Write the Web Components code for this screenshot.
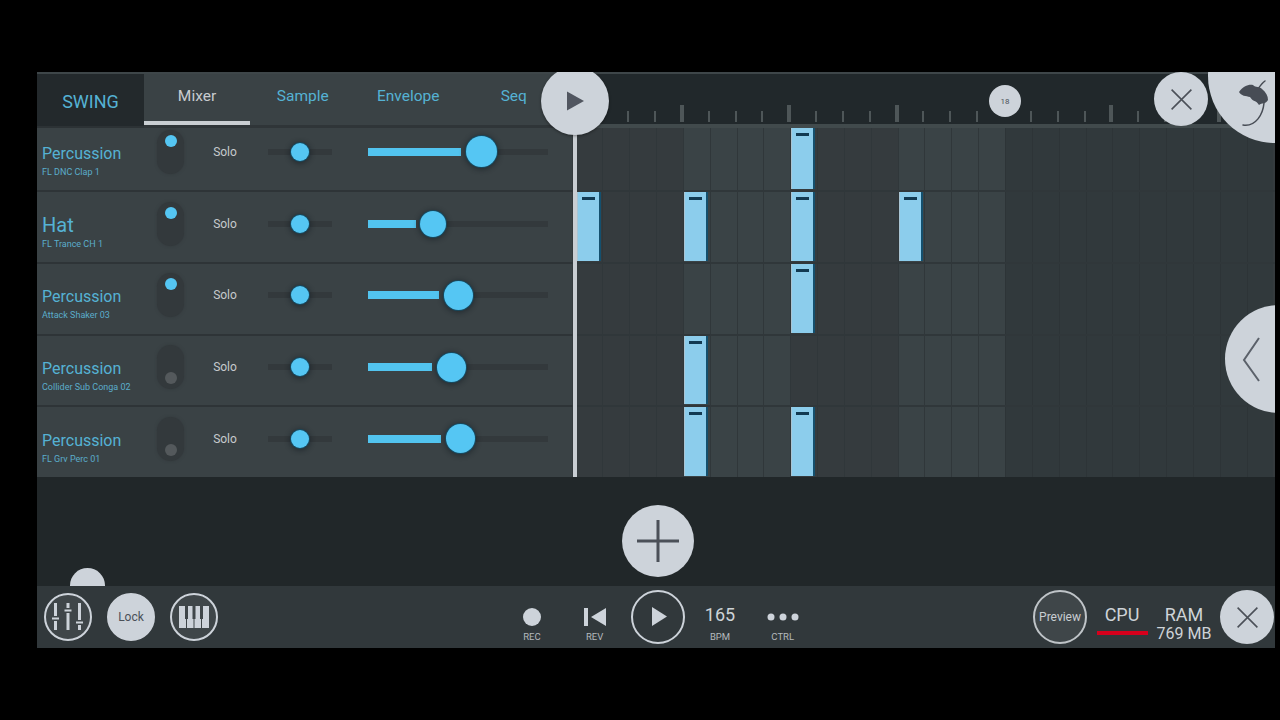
<!DOCTYPE html>
<html lang="en"><head><meta charset="utf-8"><title>FL Studio Mobile</title>
<style>
html,body{margin:0;height:100%;background:#000;overflow:hidden}
body{font-family:Roboto,"Liberation Sans",sans-serif}
</style></head><body>
<app-shell>
  <top-bar slot="top"></top-bar>
  <channel-row first name="Percussion" sub="FL DNC Clap 1" on pan="32" vol="113" knob="31" notes="8"></channel-row>
  <channel-row big name="Hat" sub="FL Trance CH 1" on pan="32" vol="65" knob="26" notes="0,4,8,12"></channel-row>
  <channel-row name="Percussion" sub="Attack Shaker 03" on pan="32" vol="90" knob="29" notes="8"></channel-row>
  <channel-row name="Percussion" sub="Collider Sub Conga 02" pan="32" vol="83" knob="29" notes="4"></channel-row>
  <channel-row name="Percussion" sub="FL Grv Perc 01" pan="32" vol="92" knob="29" notes="4,8"></channel-row>
  <add-area slot="add"></add-area>
  <bottom-bar slot="bottom"></bottom-bar>
</app-shell>
<script>
const STEP = 26.85, CIRCLE = '#cdd3da', INK = '#4b5058';
class Base extends HTMLElement {
  constructor(){ super(); this.attachShadow({mode:'open'}); }
  connectedCallback(){ this.shadowRoot.innerHTML = this.render(); }
}
const plusX = (s)=>`<svg width="${s}" height="${s}" viewBox="0 0 24 24" fill="none" stroke="${INK}" stroke-width="1.5"><path d="M2.5 2.5 21.5 21.5M21.5 2.5 2.5 21.5"/></svg>`;

customElements.define('app-shell', class extends Base {
  render(){ return `<style>
    :host{display:block;position:relative;box-sizing:border-box;width:1238px;height:576px;margin:72px 0 0 37px;overflow:hidden;background:#212729}
    .wrap{display:flex;flex-direction:column;height:100%}
    .rows{display:flex;flex-direction:column;flex:none}
    .head{position:absolute;left:504px;top:-5px;width:68px;height:68px;border-radius:50%;background:${CIRCLE};display:flex;align-items:center;justify-content:center;box-shadow:0 1px 3px rgba(0,0,0,.4)}
    .line{position:absolute;left:535.5px;top:56px;width:4.5px;height:349px;background:#c9ced3}
    .x{position:absolute;left:1117px;top:0;width:54px;height:54px;border-radius:50%;background:${CIRCLE};display:flex;align-items:center;justify-content:center}
    .logo{position:absolute;left:1171px;top:-63px;width:134px;height:134px;border-radius:50%;background:${CIRCLE}}
    .logo svg{position:absolute;left:0;top:0}
    .side{position:absolute;left:1188px;top:233px;width:108px;height:108px;border-radius:50%;background:${CIRCLE}}
    .side svg{position:absolute;left:14px;top:30px}
  </style>
  <div class="wrap"><slot name="top"></slot><div class="rows"><slot></slot></div><slot name="add"></slot><slot name="bottom"></slot></div>
  <div class="line"></div>
  <div class="head"><svg width="22" height="22" viewBox="0 0 22 22"><path d="M3 1.500 20 11 3 20.500Z" fill="#515660"/></svg></div>
  <div class="x">${plusX(25)}</div>
  <div class="logo"><svg width="134" height="134" viewBox="1208 9 134 134" fill="none">
    <path d="M1239 92C1243 86 1249 84 1253 85C1256 88 1259 86 1262 89C1266 92 1268 96 1268 100C1265 105 1262 102 1259 105C1256 100 1253 102 1250 97C1246 96 1241 96 1239 92Z" fill="#474c55"/>
    <path d="M1265 81C1262 83 1260 86 1258 89M1264 103C1263 114 1256 127 1243 125" stroke="#474c55" stroke-width="1.500" stroke-linecap="round"/></svg></div>
  <div class="side"><svg width="24" height="50" viewBox="0 0 24 50" fill="none"><path d="M20 3 5 25 20 46" stroke="#5b616a" stroke-width="2"/></svg></div>`; }
});

customElements.define('top-bar', class extends Base {
  render(){
    let ticks=''; for(let i=0;i<26;i++) ticks+=`<i class="${i==16?'none':(i%4==0?'maj':'')}"></i>`;
    return `<style>
    :host{display:flex;height:56px;background:#3a4245;color:#55b2d4;font-size:15.5px;border-top:2px solid #3e4649;box-sizing:border-box}
    .swing{width:107px;background:#23292c;display:flex;align-items:center;justify-content:center;font-size:18px;padding-top:2px;box-sizing:border-box;border-bottom:2px solid #2c3235}
    .tab{width:105.500px;display:flex;align-items:flex-start;justify-content:center;padding-top:12.500px;box-sizing:border-box;border-bottom:3px solid #2f3538;position:relative}
    .tab.on{color:#c8ccd0;width:106px}
    .tab.on::after{content:"";position:absolute;left:0;right:0;bottom:0;height:4px;background:#c9ced2}
    .gap{width:5.500px;border-bottom:3px solid #2f3538}
    .ruler{flex:1;background:#21282b;border-bottom:4px solid #414a4c;box-sizing:border-box;display:flex;align-items:flex-end;padding-left:1.500px;position:relative;padding-bottom:2px}
    i{display:block;flex:none;width:${STEP}px;height:11px;background:linear-gradient(#4e5658,#4e5658) 0 100%/2px 100% no-repeat}
    i.maj{height:17px;width:${STEP+1}px;margin-left:-1px;background-size:4px 100%}
    i.none{background:none}
    b{position:absolute;left:417px;top:11px;width:32px;height:32px;border-radius:50%;background:${CIRCLE};color:#4b5058;font:400 8px Roboto,sans-serif;display:flex;align-items:center;justify-content:center}
    </style>
    <div class="swing">SWING</div>
    <div class="tab on">Mixer</div><div class="tab">Sample</div><div class="tab">Envelope</div><div class="tab">Seq</div><div class="gap"></div>
    <div class="ruler">${ticks}<b>18</b></div>`; }
});

customElements.define('fl-toggle', class extends Base {
  render(){ const on=this.hasAttribute('on'); return `<style>
    :host{display:block;position:relative;flex:none;width:27px;height:44px;border-radius:14px;background:#33393c;box-shadow:0 0 3px #33393c}
    u{position:absolute;left:7.500px;top:${on?5:27}px;width:12px;height:12px;border-radius:50%;background:${on?'#55c6f3':'#54595c'}}
    </style><u></u>`; }
});

customElements.define('fl-slider', class extends Base {
  render(){
    const w=+this.getAttribute('w'), v=+this.getAttribute('value'), k=+this.getAttribute('knob'), fill=this.hasAttribute('fill');
    return `<style>
    :host{display:block;position:relative;flex:none;width:${w}px;height:32px}
    .t{position:absolute;left:0;right:0;top:13px;height:6px;background:#33393c}
    .f{position:absolute;left:0;top:12px;height:8px;width:${v-k/2-4.5}px;background:#52c4ef}
    .k{position:absolute;left:${v-k/2}px;top:${16-k/2}px;width:${k}px;height:${k}px;border-radius:50%;background:#55c6f3;box-shadow:0 0 0 1px #174a60,0 1px 5px 2px rgba(15,25,30,.45)}
    </style>${fill?`<div class="t" style="left:${v}px"></div><div class="f"></div>`:'<div class="t"></div>'}<div class="k"></div>`; }
});

customElements.define('step-track', class extends Base {
  render(){
    const notes=(this.getAttribute('notes')||'').split(',').filter(Boolean).map(Number);
    let cells='';
    for(let i=0;i<26;i++){
      const bar=Math.floor(i/4);
      const cls=bar>=4?'far':(bar%2?'lite':'dark');
      cells+=`<div class="c ${cls}">${notes.includes(i)?'<div class="n"></div>':''}</div>`;
    }
    return `<style>
    :host{display:flex;flex:1;padding-left:3.500px;background:#353b3e;min-width:0;overflow:hidden;box-sizing:border-box;border-top:var(--sep,0) solid #30373a}
    .c{flex:none;width:${STEP}px;box-sizing:border-box;border-left:1px solid #30373a;position:relative;display:flex}
    .dark{background:#353b3e}.lite{background:#3a4346}.far{background:#31393c;border-left-color:#2d3437}
    .n{box-sizing:border-box;width:24px;margin:0 0 1px 0;background:#8ccdec;border-left:1px solid #a9c5d4;border-right:2px solid #14506e;display:flex;justify-content:center;padding-top:5px}
    .n::before{content:"";display:block;width:13px;height:3px;background:#123a52}
    </style>${cells}`; }
});

customElements.define('channel-row', class extends Base {
  render(){
    const g=a=>this.getAttribute(a), first=this.hasAttribute('first'), big=this.hasAttribute('big');
    return `<style>
    :host{display:flex;box-sizing:border-box;height:${first?62:71.75}px;background:#3a4245;--sep:${first?0:2}px}
    .p{flex:none;width:535px;box-sizing:border-box;border-top:var(--sep) solid #2e3437;padding-bottom:${first?14.5:6.5}px;display:flex;align-items:center}
    .name{flex:none;width:120px;box-sizing:border-box;padding:${big?17:18}px 0 0 5px;color:#55b2d4}
    .t{font-size:${big?20:16}px;line-height:20px;white-space:nowrap}
    .s{font-size:9px;line-height:12px;margin-top:${big?3:2}px;white-space:nowrap;color:#5aadcb}
    .solo{flex:none;width:24px;margin:0 31px 0 29px;font-size:12px;color:#c6cacd;text-align:center}
    fl-slider.v{margin-left:36px}
    </style>
    <div class="p"><div class="name"><div class="t">${g('name')}</div><div class="s">${g('sub')}</div></div>
    <fl-toggle ${this.hasAttribute('on')?'on':''}></fl-toggle><div class="solo">Solo</div>
    <fl-slider w="64" value="32" knob="18"></fl-slider>
    <fl-slider class="v" w="180" fill value="${g('vol')}" knob="${g('knob')}"></fl-slider></div>
    <step-track notes="${g('notes')}"></step-track>`; }
});

customElements.define('add-area', class extends Base {
  render(){ return `<style>
    :host{display:flex;position:relative;flex:1;min-height:0;background:#212729;align-items:center;justify-content:center;padding:18px 0 0 4px;box-sizing:border-box}
    .a{width:72px;height:72px;border-radius:50%;background:${CIRCLE};display:flex;align-items:center;justify-content:center}
    .h{position:absolute;left:32.500px;bottom:0;width:35px;height:18px;border-radius:18px 18px 0 0;background:${CIRCLE}}
    </style><div class="a"><svg width="42" height="42" viewBox="0 0 42 42"><path d="M0 21H42M21 0V42" stroke="${INK}" stroke-width="3"/></svg></div><div class="h"></div>`; }
});

customElements.define('transport-item', class extends Base {
  render(){ return `<style>
    :host{display:flex;flex:none;width:62.700px;height:62px;flex-direction:column;align-items:center;box-sizing:border-box;padding-top:19px;color:#c6cbd0}
    .i{height:24px;display:flex;align-items:center;justify-content:center}
    .l{font-size:9.500px;line-height:12px;margin-top:2px;color:#b4b9bd}
    </style><div class="i"><slot></slot></div><div class="l">${this.getAttribute('label')}</div>`; }
});

customElements.define('bottom-bar', class extends Base {
  render(){ return `<style>
    :host{display:flex;flex:none;height:62px;background:#31383b;align-items:center;color:#cdd3da}
    .rc{flex:none;box-sizing:border-box;width:48px;height:48px;border-radius:50%;border:2px solid ${CIRCLE};background:#3f4649;display:flex;align-items:center;justify-content:center}
    .rc svg{overflow:visible}
    .lock{background:${CIRCLE};color:#4b5058;font-size:12px}
    .left{display:flex;gap:15px;margin-left:7px;width:173px;flex:none}
    .mid{display:flex;align-items:center;margin-left:283.600px;flex:none}
    .play{flex:none;width:62.700px;display:flex;justify-content:center}
    .play div{box-sizing:border-box;width:54px;height:54px;margin-left:1px;border-radius:50%;border:2px solid ${CIRCLE};display:flex;align-items:center;justify-content:center}
    .play svg{margin-left:3px;margin-top:-1px}
    .bpm{font-size:18px;line-height:20px;align-self:flex-start;display:block;height:24px;color:#ced3d7}
    .prev{box-sizing:border-box;flex:none;width:54px;height:54px;border-radius:50%;border:2px solid #bfc4c8;background:#3f4649;color:#c9ced2;font-size:12px;display:flex;align-items:center;justify-content:center;margin-left:219px}
    .st{flex:none;box-sizing:border-box;display:flex;flex-direction:column;align-items:center;color:#ced3d7;font-size:18px;line-height:20px;width:62px}
    .st small{font-size:16px;line-height:18px;display:block}
    .st em{display:block;width:51px;height:4px;margin:6px 0 4px;background:#d6001c}
    .x{flex:none;width:54px;height:54px;border-radius:50%;background:${CIRCLE};display:flex;align-items:center;justify-content:center;margin-left:5px}
    </style>
    <div class="left">
      <div class="rc"><svg width="30" height="28" viewBox="0 0 30 28" fill="#cdd3da"><path d="M1 0h3v13H1zM1 18h3v9H1zM-1 14.500h7v2h-7zM13.500 0h3v5h-3zM13.500 10h3v17h-3zM11.500 6.500h7v2h-7zM25 0h3v17h-3zM25 22h3v5h-3zM23 18.500h7v2h-7z"/></svg></div>
      <div class="rc lock">Lock</div>
      <div class="rc"><svg width="30" height="24" viewBox="0 0 30 24"><path fill="#cdd3da" d="M0 1h30v22H0z"/><path fill="#3f4649" d="M6 1h3v13H6zM13.500 1h3v13h-3zM21 1h3v13h-3zM7 14h1v9H7zM14.500 14h1v9h-1zM22 14h1v9h-1z"/></svg></div>
    </div>
    <div class="mid">
      <transport-item label="REC"><svg width="18" height="18"><circle cx="9" cy="9" r="9" fill="#cdd3da"/></svg></transport-item>
      <transport-item label="REV"><svg width="22" height="20" viewBox="0 0 22 20" fill="#cdd3da"><path d="M0 1h4v18H0zM22 1v18L7 10z"/></svg></transport-item>
      <div class="play"><div><svg width="15" height="19" viewBox="0 0 15 19"><path d="M0 0 15 9.500 0 19Z" fill="#cdd3da"/></svg></div></div>
      <transport-item label="BPM"><span class="bpm">165</span></transport-item>
      <transport-item label="CTRL"><svg width="32" height="8" viewBox="0 0 32 8" fill="#cdd3da"><circle cx="4" cy="4" r="3.500"/><circle cx="16" cy="4" r="3.500"/><circle cx="28" cy="4" r="3.500"/></svg></transport-item>
    </div>
    <div class="prev">Preview</div>
    <div class="st" style="margin-left:4px;padding-top:10px"><span>CPU</span><em></em></div>
    <div class="st" style="padding-top:14px"><span>RAM</span><small>769 MB</small></div>
    <div class="x">${plusX(25)}</div>`; }
});
</script>
</body></html>
